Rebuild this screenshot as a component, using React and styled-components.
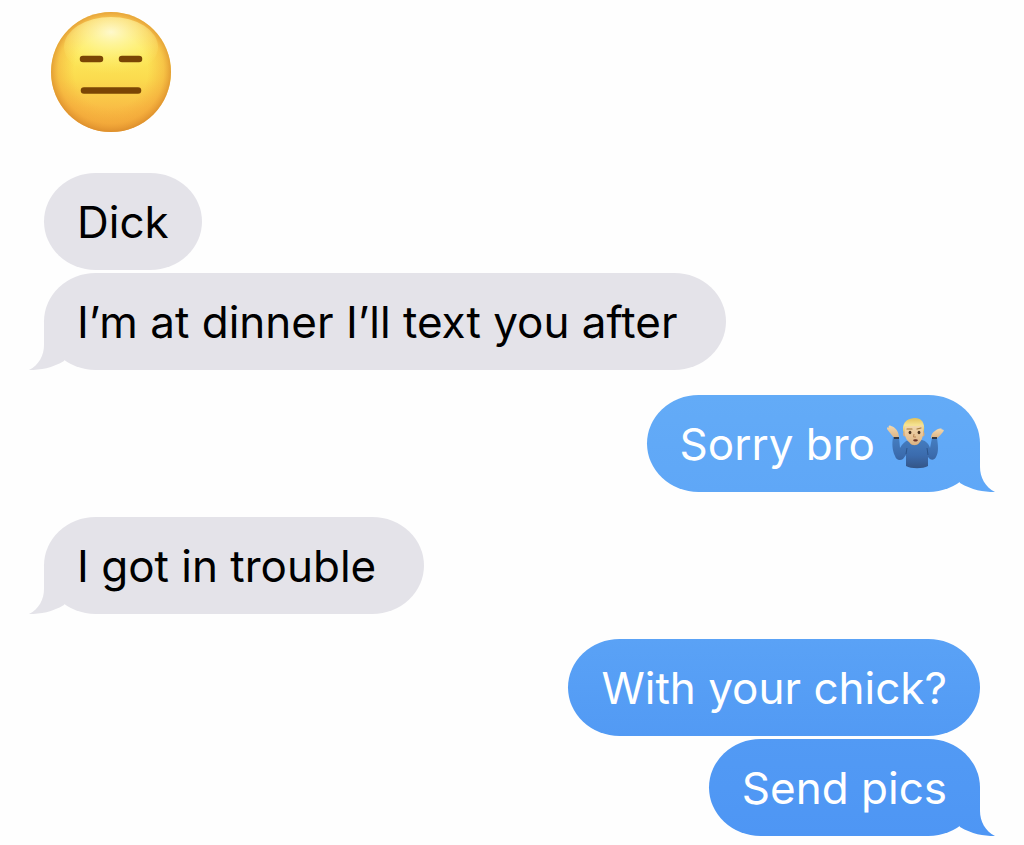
import React from 'react';
import styled, { createGlobalStyle, css } from 'styled-components';

const GlobalStyle = createGlobalStyle`
  *, *::before, *::after { box-sizing: border-box; }
  body {
    margin: 0;
    background: #fefefe;
    font-family: Inter, "Liberation Sans", sans-serif;
  }
`;

const Conversation = styled.main`
  padding: 12px 44px 8px;
`;

const Thread = styled.ol`
  display: flex;
  flex-direction: column;
  gap: 25px;
  margin: 0;
  padding: 0;
  list-style: none;
`;

const Group = styled.li`
  display: flex;
  flex-direction: column;
  gap: 3px;
  align-items: ${({ $sent }) => ($sent ? 'flex-end' : 'flex-start')};
`;

const Reaction = styled.li`
  display: flex;
  padding: 0 7px 16px;
`;

const palette = {
  received: { top: '#e4e3e9', middle: '#e4e3e9', bottom: '#e4e3e9', text: '#000' },
  sky: { top: '#63abf7', middle: '#61a9f7', bottom: '#5fa7f7', text: '#fff' },
  azure: { top: '#5aa2f6', middle: '#569ef5', bottom: '#529af4', text: '#fff' },
  blue: { top: '#529af4', middle: '#5098f4', bottom: '#4e96f4', text: '#fff' },
};

const Bubble = styled.p`
  position: relative;
  display: flex;
  align-items: center;
  gap: 12px;
  min-height: 97px;
  margin: 0;
  padding: 20px ${({ $roomy }) => ($roomy ? 48 : 33)}px 20px 33px;
  border-radius: 52px / 49px;
  font-size: 44px;
  line-height: 56px;
  ${({ $tone }) => css`
    background: linear-gradient(${palette[$tone].top}, ${palette[$tone].bottom});
    color: ${palette[$tone].text};
  `}
`;

const Tail = styled.svg`
  position: absolute;
  bottom: 0;
  width: 60px;
  height: 49px;
  ${({ $sent }) => ($sent ? 'right: -16px;' : 'left: -16px; transform: scaleX(-1);')}
`;

const FaceIcon = styled.svg`
  display: block;
  width: 120px;
  height: 120px;
`;

const ShrugIcon = styled.svg`
  flex: none;
  width: 60px;
  height: 54px;
`;

function BubbleTail({ sent, tone }) {
  const { middle, bottom } = palette[tone];
  return (
    <Tail $sent={sent} viewBox="0 0 60 49" aria-hidden="true">
      <defs>
        <linearGradient id={`tail-${tone}`} x1="0" y1="0" x2="0" y2="1">
          <stop offset="0" stopColor={middle} />
          <stop offset="1" stopColor={bottom} />
        </linearGradient>
      </defs>
      <path d="M44 0V24C44 34 49 44 59 49C47 49 36 47 24 40L16 24Z" fill={`url(#tail-${tone})`} />
    </Tail>
  );
}

function ExpressionlessFace() {
  return (
    <FaceIcon viewBox="0 0 120 120" role="img" aria-label="Expressionless face">
      <defs>
        <linearGradient id="faceBase" x1="0" y1="0" x2="0" y2="1">
          <stop offset="0" stopColor="#fbdc62" />
          <stop offset="0.3" stopColor="#fdea5c" />
          <stop offset="0.55" stopColor="#fbdc4f" />
          <stop offset="0.8" stopColor="#f9bd45" />
          <stop offset="1" stopColor="#f3aa3a" />
        </linearGradient>
        <radialGradient id="faceEdge" cx="0.5" cy="0.49" r="0.51">
          <stop offset="0.6" stopColor="#f3a536" stopOpacity="0" />
          <stop offset="0.86" stopColor="#f0a035" stopOpacity="0.45" />
          <stop offset="1" stopColor="#d98a2a" stopOpacity="0.85" />
        </radialGradient>
        <radialGradient id="faceShine" cx="0.5" cy="0.25" r="0.7">
          <stop offset="0" stopColor="#fffde0" stopOpacity="0.85" />
          <stop offset="0.4" stopColor="#fff9a8" stopOpacity="0.6" />
          <stop offset="1" stopColor="#fff36d" stopOpacity="0" />
        </radialGradient>
      </defs>
      <circle cx="60" cy="60" r="60" fill="url(#faceBase)" />
      <circle cx="60" cy="60" r="60" fill="url(#faceEdge)" />
      <ellipse cx="60" cy="35" rx="47" ry="30" fill="url(#faceShine)" />
      <g stroke="#7a4505" strokeWidth="6.5" strokeLinecap="round">
        <path d="M32 47H49" />
        <path d="M71 47H88" />
        <path d="M33 78.500H87" />
      </g>
    </FaceIcon>
  );
}

function ShruggingMan() {
  return (
    <ShrugIcon viewBox="0 0 60 54" role="img" aria-label="Man shrugging">
      <defs>
        <linearGradient id="shirt" x1="0" y1="0" x2="0" y2="1">
          <stop offset="0" stopColor="#467fc2" />
          <stop offset="0.6" stopColor="#3b6bad" />
          <stop offset="1" stopColor="#345587" />
        </linearGradient>
        <linearGradient id="hair" x1="0" y1="0" x2="0" y2="1">
          <stop offset="0" stopColor="#e2c15a" />
          <stop offset="0.4" stopColor="#f6e493" />
          <stop offset="1" stopColor="#cfa645" />
        </linearGradient>
        <linearGradient id="skin" x1="0" y1="0" x2="0" y2="1">
          <stop offset="0" stopColor="#f3d9ae" />
          <stop offset="1" stopColor="#dcb384" />
        </linearGradient>
      </defs>
      <path d="M12 21H7C5 18 2 15 0 12C0 10 1 10 2 11C1 9 2 8 4 9C8 10 12 14 12 21Z" fill="url(#skin)" />
      <path d="M44 21C44 17 46 15 48 14C50 12 53 11 55 12L54 13C56 12 58 13 56 15C54 17 52 20 50 21Z" fill="url(#skin)" />
      <path d="M6 20H12L13 31C15 27 18 24 22 23H35C39 24 42 27 43 31L45 21H50C51 28 52 35 49 40C47 44 43 43 41 40V49C36 52 24 52 19 49V38L16 42C13 44 9 43 8 39C5 33 5 26 6 20Z" fill="url(#shirt)" />
      <path d="M7 20H12V22H7ZM45 20H50V22H45Z" fill="#343b46" />
      <path d="M19 37L20 31M41 38L40 31" stroke="#2b548b" strokeWidth="1" fill="none" />
      <g transform="translate(-1 0)">
        <path d="M24 22H33V26C31 29 26 29 24 26Z" fill="#c99a68" />
        <path d="M17 14C16 4 23 1 29 1C35 1 39 5 38 14L36 19H20Z" fill="url(#hair)" />
        <ellipse cx="18.500" cy="17" rx="1.500" ry="2.500" fill="#dcae79" />
        <ellipse cx="37" cy="17" rx="1.500" ry="2.500" fill="#dcae79" />
        <path d="M19 10C24 8 32 10 36 8C38 15 37 22 34 25C31 29 26 29 23 25C19 22 18 16 19 10Z" fill="url(#skin)" />
        <path d="M21 12L26 12M31 12L35 11" stroke="#a2793a" strokeWidth="1.200" strokeLinecap="round" />
        <ellipse cx="24" cy="15.500" rx="1.400" ry="1.700" fill="#48321f" />
        <ellipse cx="33" cy="15.500" rx="1.400" ry="1.700" fill="#48321f" />
        <path d="M28 17L27.500 20H30" stroke="#b98553" strokeWidth="1" fill="none" />
        <path d="M27 23C28 22 31 22 32 23C31 25 28 25 27 23Z" fill="#6b3429" />
      </g>
    </ShrugIcon>
  );
}

const groups = [
  {
    messages: [
      { text: 'Dick', tone: 'received' },
      { text: 'I’m at dinner I’ll text you after', tone: 'received', roomy: true },
    ],
  },
  { sent: true, messages: [{ text: 'Sorry bro', tone: 'sky', shrug: true }] },
  { messages: [{ text: 'I got in trouble', tone: 'received', roomy: true }] },
  {
    sent: true,
    messages: [
      { text: 'With your chick?', tone: 'azure' },
      { text: 'Send pics', tone: 'blue' },
    ],
  },
];

export default function App() {
  return (
    <>
      <GlobalStyle />
      <Conversation>
        <Thread>
          <Reaction>
            <ExpressionlessFace />
          </Reaction>
          {groups.map((group, g) => (
            <Group key={g} $sent={group.sent}>
              {group.messages.map((message, i) => (
                <Bubble key={message.text} $tone={message.tone} $roomy={message.roomy}>
                  {i === group.messages.length - 1 && (
                    <BubbleTail sent={group.sent} tone={message.tone} />
                  )}
                  <span>{message.text}</span>
                  {message.shrug && <ShruggingMan />}
                </Bubble>
              ))}
            </Group>
          ))}
        </Thread>
      </Conversation>
    </>
  );
}
